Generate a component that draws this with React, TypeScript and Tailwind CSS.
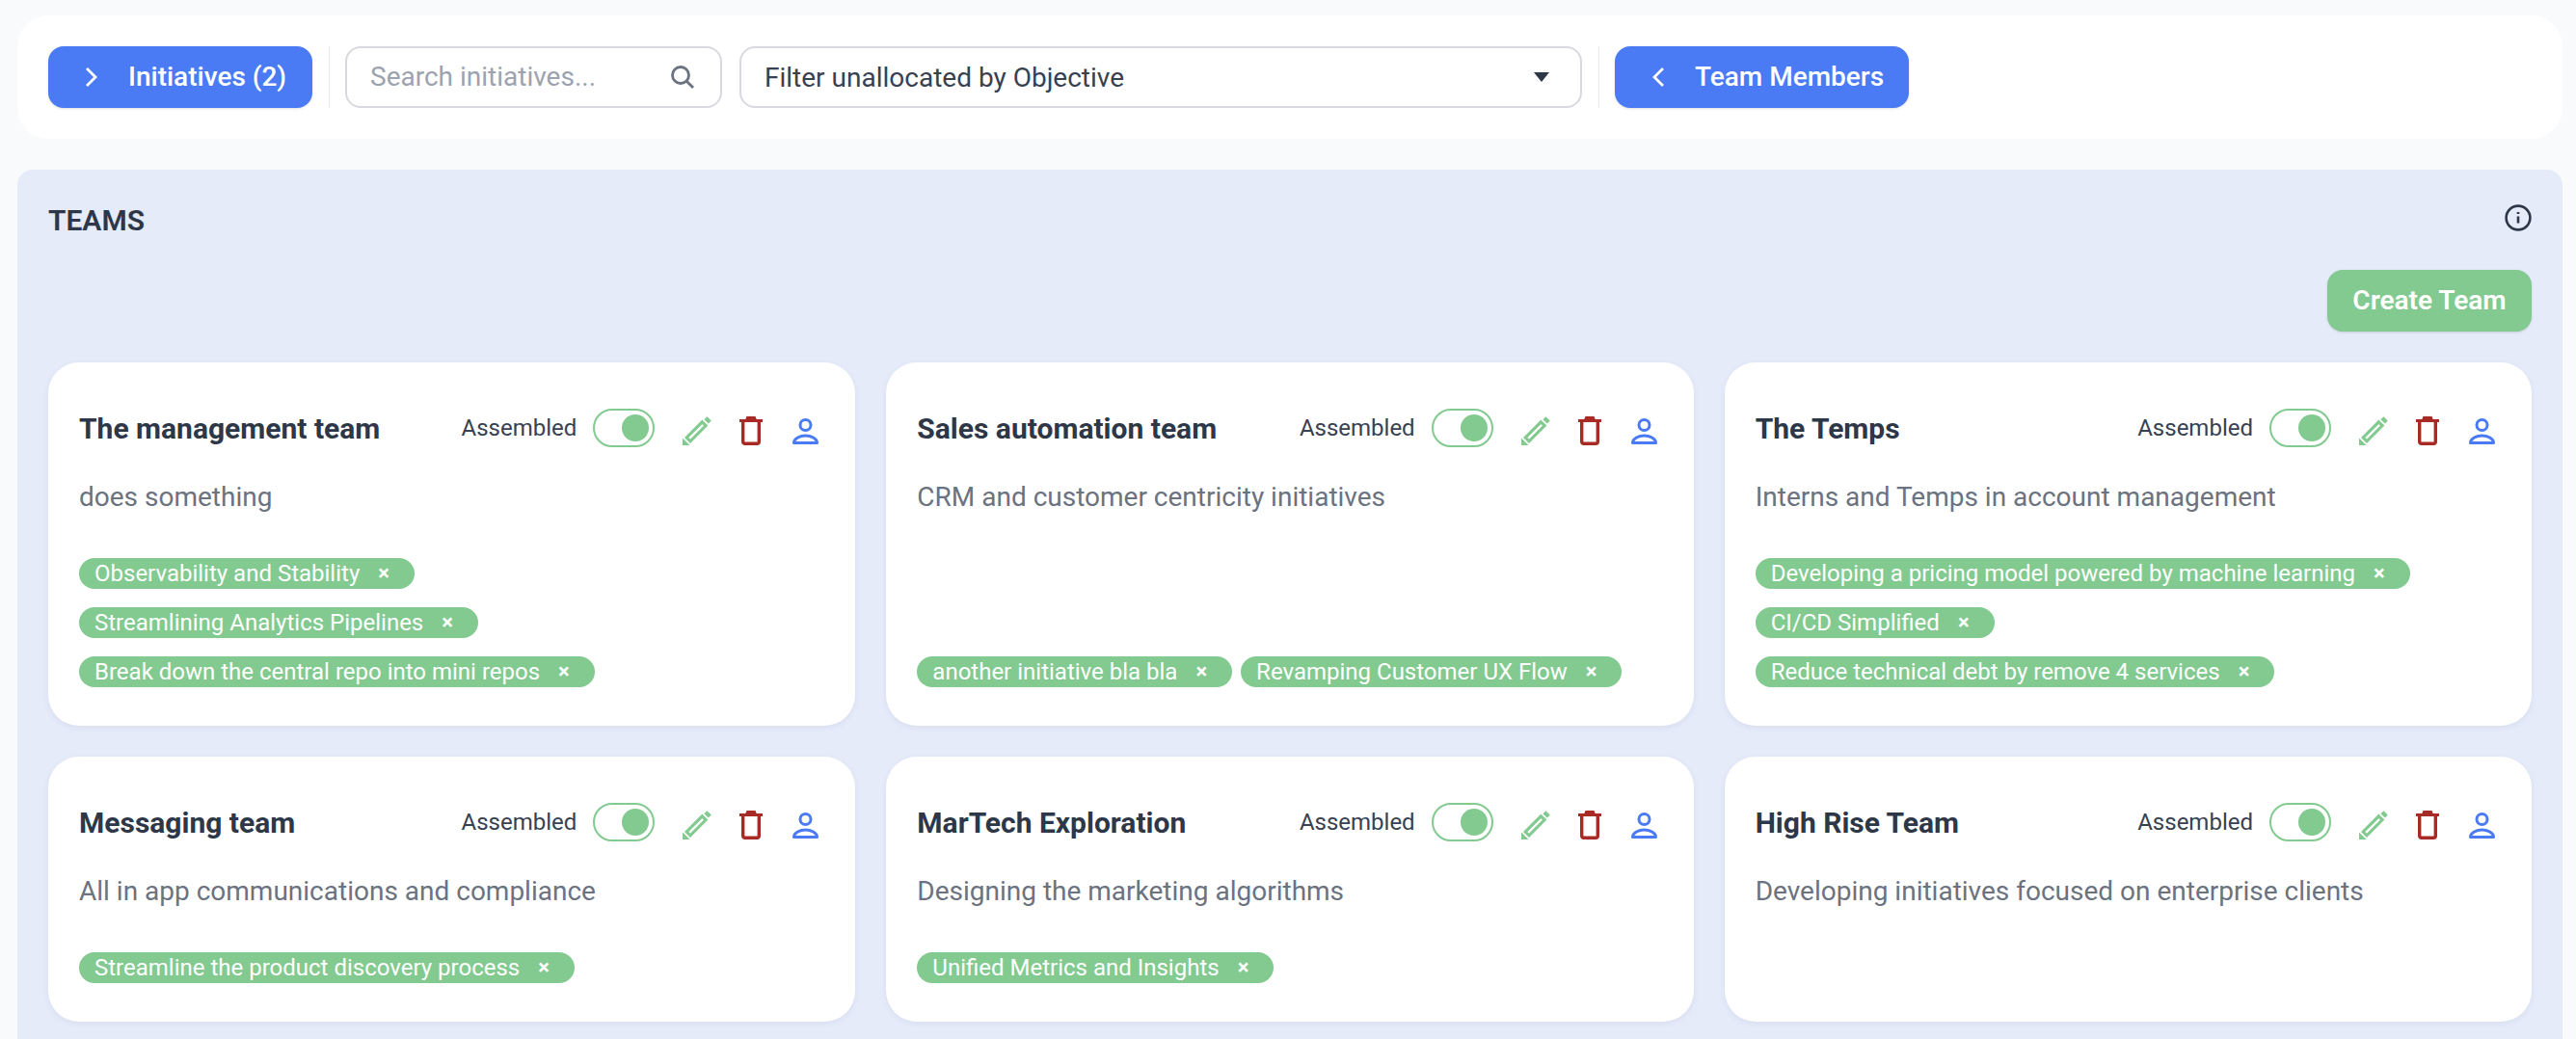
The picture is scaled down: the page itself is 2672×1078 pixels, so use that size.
import React from "react";

const rows = [
  [
    { t: "The management team", d: "does something", tags: ["Observability and Stability", "Streamlining Analytics Pipelines", "Break down the central repo into mini repos"] },
    { t: "Sales automation team", d: "CRM and customer centricity initiatives", tags: ["another initiative bla bla", "Revamping Customer UX Flow"] },
    { t: "The Temps", d: "Interns and Temps in account management", tags: ["Developing a pricing model powered by machine learning", "CI/CD Simplified", "Reduce technical debt by remove 4 services"] },
  ],
  [
    { t: "Messaging team", d: "All in app communications and compliance", tags: ["Streamline the product discovery process"] },
    { t: "MarTech Exploration", d: "Designing the marketing algorithms", tags: ["Unified Metrics and Insights"] },
    { t: "High Rise Team", d: "Developing initiatives focused on enterprise clients", tags: [] as string[] },
  ],
];

function Pencil() {
  return (
    <svg width="30" height="30" viewBox="0 0 30 30" fill="#82ca90" className="shrink-0">
      <path d="M20.4 5.8 24.2 9.6 8 25.8 4.2 22Z" fill="none" stroke="#82ca90" strokeWidth="3.1" strokeLinejoin="miter" />
      <path d="M0 22.4 7.6 30H0Z" />
      <path d="M25.4 .2 29.8 4.6 26.8 7.6 22.4 3.2Z" />
    </svg>
  );
}

function Trash() {
  return (
    <svg width="24" height="30" viewBox="0 0 24 30" className="shrink-0">
      <path d="M0 3h24v3H0z M7.5 0h9l1.2 3H6.3z" fill="#a82a25" />
      <path d="M3.7 6v20.3a2 2 0 0 0 2 2h12.6a2 2 0 0 0 2-2V6" fill="none" stroke="#a82a25" strokeWidth="3.4" />
    </svg>
  );
}

function Person() {
  return (
    <svg width="27" height="27" viewBox="0 0 27 27" fill="none" stroke="#4a7bf5" strokeWidth="3" className="shrink-0">
      <circle cx="13.5" cy="7" r="5.5" />
      <path d="M1.5 25.5c0-4.4 6.4-7.6 12-7.6s12 3.2 12 7.6z" strokeLinejoin="round" />
    </svg>
  );
}

function Card({ t, d, tags }: { t: string; d: string; tags: string[] }) {
  return (
    <div className="bg-white rounded-[32px] pt-[48px] pb-[40px] px-[32px] flex flex-col shadow-[0_2px_6px_rgba(60,80,130,0.08)]">
      <div className="flex items-center h-[40px]">
        <div className="flex-1 text-[30px] leading-[40px] font-bold text-[#2d3748] mt-[2px]">{t}</div>
        <span className="text-[24px] leading-[32px] text-[#374151] mr-[17px]">Assembled</span>
        <div className="w-[64px] h-[40px] rounded-full border-[2px] border-[#82ca90] flex items-center justify-end pr-[4px]">
          <div className="w-[28px] h-[28px] rounded-full bg-[#82ca90]" />
        </div>
        <div className="ml-[29px] flex items-center mt-[6px]">
          <Pencil />
          <div className="ml-[29px]"><Trash /></div>
          <div className="ml-[31px] mr-[6px]"><Person /></div>
        </div>
      </div>
      <p className="mt-[32px] text-[28px] leading-[40px] text-[#6b7280]">{d}</p>
      <div className="mt-auto pt-[43px] pr-[16px] flex flex-wrap gap-x-[9px] gap-y-[19px]">
        {tags.map((x) => (
          <span key={x} className="h-[32px] rounded-full bg-[#82ca90] pl-[16px] pr-[26px] flex items-center text-white text-[24px] leading-[32px] whitespace-nowrap">
            {x}
            <span className="ml-[19px] text-[22px] font-bold leading-none">×</span>
          </span>
        ))}
      </div>
    </div>
  );
}

export default function App() {
  return (
    <div className="h-screen overflow-hidden bg-[#f8fafc] pt-[16px] pl-[18px] pr-[14px] font-['Roboto',sans-serif] antialiased">
      <div className="h-[128px] bg-white rounded-[32px] px-[32px] flex items-center">
        <button className="h-[64px] w-[274px] rounded-[16px] bg-[#4a7bf5] text-white text-[28px] font-medium flex items-center pl-[38px] shadow-sm">
          <svg width="14" height="22" viewBox="0 0 14 22" fill="none" stroke="white" strokeWidth="2.8" className="mr-[31px]"><path d="M2 2l9 9-9 9" /></svg>
          Initiatives (2)
        </button>
        <div className="w-px h-[64px] bg-[#e5e7eb] ml-[17px] mr-[16px]" />
        <div className="w-[391px] h-[64px] rounded-[16px] border-[2px] border-[#d8d9e0] flex items-center pl-[24px] pr-[26px]">
          <span className="flex-1 text-[28px] text-[#9ca3af]">Search initiatives...</span>
          <svg width="26" height="26" viewBox="0 0 26 26" fill="none" stroke="#6b7280" strokeWidth="2.8"><circle cx="11" cy="11" r="8.5" /><path d="M17 17l7 7" /></svg>
        </div>
        <div className="ml-[18px] w-[874px] h-[64px] rounded-[16px] border-[2px] border-[#d8d9e0] flex items-center pl-[24px] pr-[32px]">
          <span className="flex-1 text-[28px] text-[#374151] mt-[2px]">Filter unallocated by Objective</span>
          <svg width="16" height="10" viewBox="0 0 16 10" fill="#2d3748"><path d="M0 0h16L8 10z" /></svg>
        </div>
        <div className="w-px h-[64px] bg-[#e5e7eb] ml-[17px] mr-[16px]" />
        <button className="h-[64px] w-[305px] rounded-[16px] bg-[#4a7bf5] text-white text-[28px] font-medium flex items-center pl-[38px] shadow-sm">
          <svg width="14" height="22" viewBox="0 0 14 22" fill="none" stroke="white" strokeWidth="2.8" className="mr-[31px]"><path d="M12 2l-9 9 9 9" /></svg>
          Team Members
        </button>
      </div>
      <div className="mt-[32px] h-[1000px] bg-[#e5ebf9] rounded-t-[16px] px-[32px]">
        <div className="h-[104px] flex items-center justify-between">
          <span className="text-[30px] font-semibold text-[#2d3748]">TEAMS</span>
          <svg width="28" height="28" viewBox="0 0 28 28" fill="none" stroke="#2d3748" strokeWidth="2.6" className="mt-[-4px]"><circle cx="14" cy="14" r="12.4" /><path d="M14 12.5v7M14 8v2" /></svg>
        </div>
        <div className="flex justify-end">
          <button className="h-[64px] w-[212px] rounded-[16px] bg-[#82ca90] text-white text-[28px] font-semibold shadow-sm">Create Team</button>
        </div>
        <div className="mt-[32px] grid grid-cols-3 gap-[32px]">
          {rows.flat().map((c) => <Card key={c.t} {...c} />)}
        </div>
      </div>
    </div>
  );
}
